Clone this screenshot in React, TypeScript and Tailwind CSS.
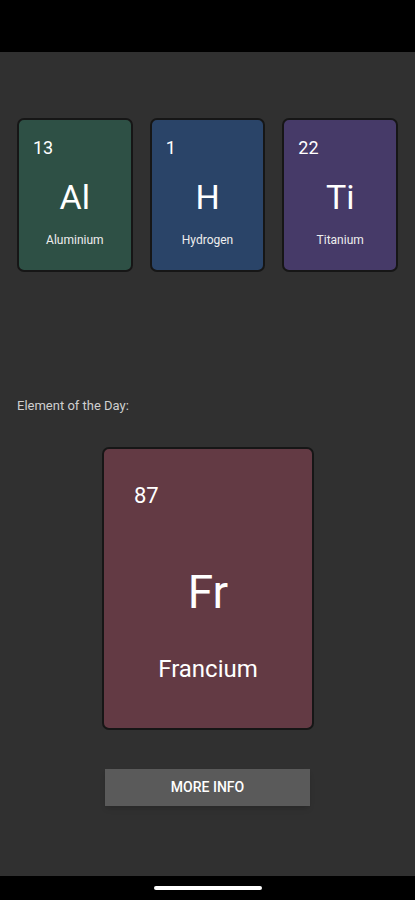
import React from "react";

const small = [
  { n: "13", s: "Al", name: "Aluminium", bg: "bg-[#2e5045]" },
  { n: "1", s: "H", name: "Hydrogen", bg: "bg-[#2a4468]" },
  { n: "22", s: "Ti", name: "Titanium", bg: "bg-[#463a68]" },
];

export default function App() {
  return (
    <div className="w-[415px] h-[900px] flex flex-col bg-black" style={{ fontFamily: "Roboto, 'Liberation Sans', sans-serif" }}>
      <div className="h-[52px] bg-black" />
      <div className="flex-1 bg-[#303030] flex flex-col">
        <div className="flex gap-[17px] px-[17px] pt-[66px]">
          {small.map((e) => (
            <div key={e.s} className={`w-[116px] h-[154px] rounded-[7px] border-2 border-[#161616] ${e.bg} flex flex-col text-white`}>
              <div className="pl-[14px] pt-[16px] text-[18px] leading-[24px]">{e.n}</div>
              <div className="text-center text-[34px] leading-[40px] mt-[17px]">{e.s}</div>
              <div className="text-center text-[12px] leading-[16px] mt-[15px] text-[#eeeeee]">{e.name}</div>
            </div>
          ))}
        </div>
        <div className="pl-[17px] mt-[125px] text-[13px] leading-[18px] text-[#cfcfcf]">Element of the Day:</div>
        <div className="flex justify-center mt-[32px]">
          <div className="w-[212px] h-[283px] ml-[1px] rounded-[7px] border-2 border-[#161616] bg-[#633a44] flex flex-col text-white">
            <div className="pl-[30px] pt-[33px] text-[22px] leading-[28px]">87</div>
            <div className="text-center text-[46px] leading-[54px] mt-[55px]">Fr</div>
            <div className="text-center text-[24px] leading-[30px] mt-[35px]">Francium</div>
          </div>
        </div>
        <div className="flex justify-center mt-[39px]">
          <div className="w-[205px] h-[37px] bg-[#5a5a5a] flex items-center justify-center text-white text-[14px] font-medium shadow-md">MORE INFO</div>
        </div>
      </div>
      <div className="h-[24px] bg-black flex justify-center pt-[10px]">
        <div className="w-[108px] h-[4px] rounded-full bg-white" />
      </div>
    </div>
  );
}
